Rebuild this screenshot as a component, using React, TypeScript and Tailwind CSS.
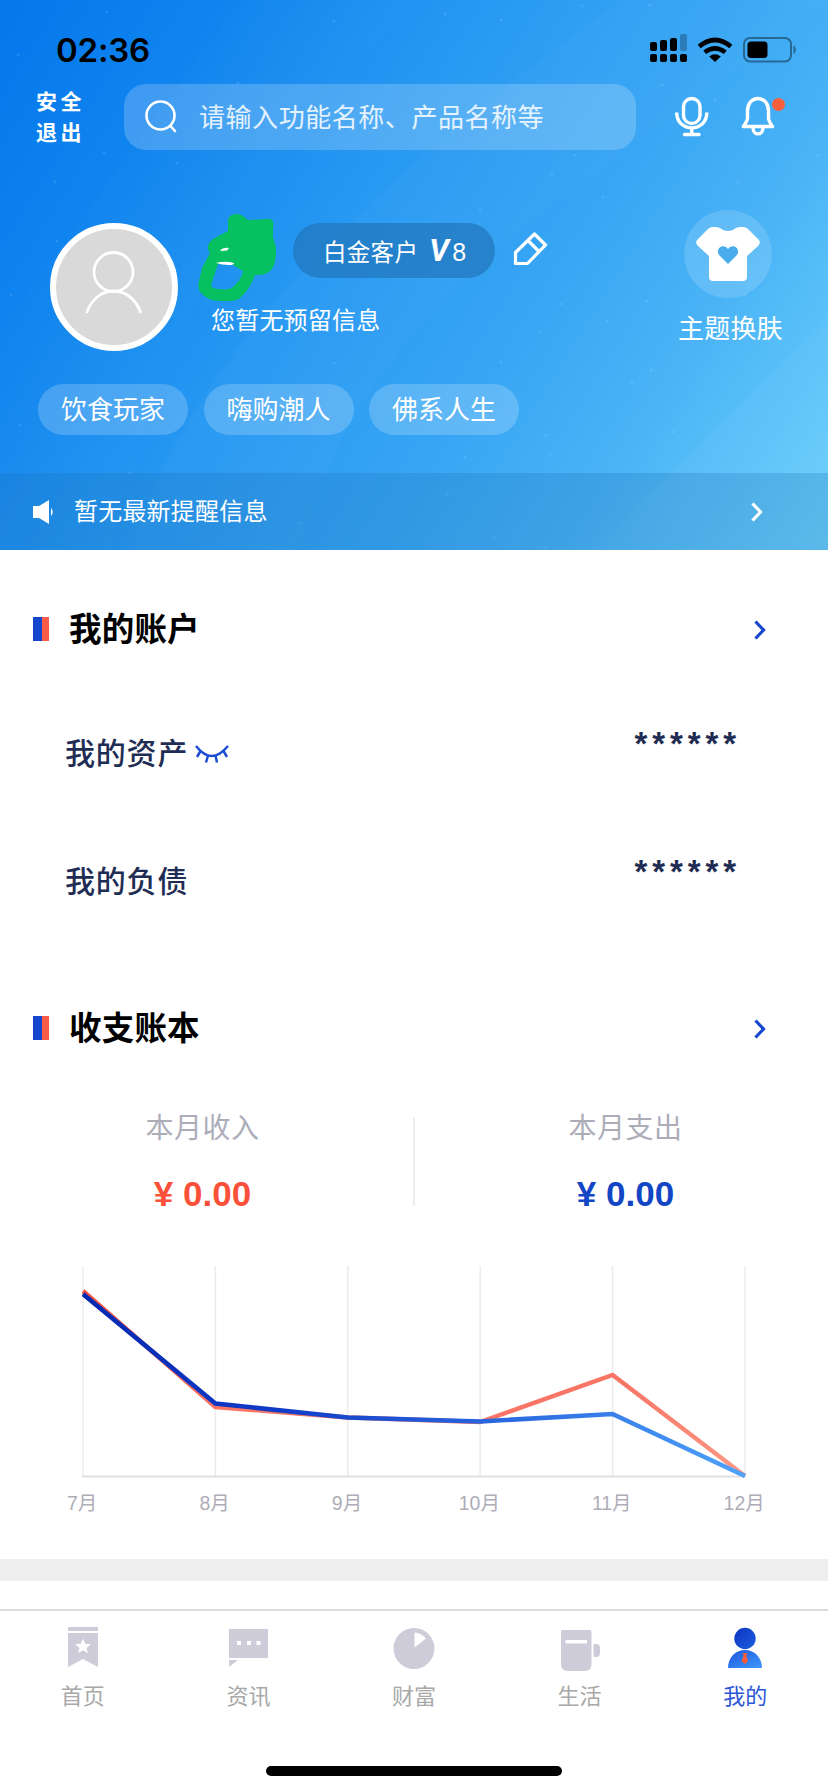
import type { ReactNode } from "react"

const months = ["7月", "8月", "9月", "10月", "11月", "12月"]
const income = [25, 141, 151.5, 156, 109, 210]
const expense = [28, 137.5, 151.5, 155.5, 148, 210]
const specks = [
  [107, 12], [334, 21], [501, 20], [650, 5], [18, 55], [238, 83], [662, 85], [104, 153], [55, 182], [177, 163],
  [552, 174], [603, 197], [738, 182], [818, 155], [57, 241], [11, 295], [647, 301], [561, 304], [607, 321], [540, 332],
  [334, 363], [501, 362], [651, 370], [632, 383], [673, 432], [546, 435], [20, 425], [465, 457], [550, 454], [130, 473],
  [301, 523], [494, 538], [545, 547], [447, 494], [582, 6], [445, 14], [715, 100], [575, 155], [745, 295], [480, 210],
]

const Chevron = ({ className }: { className: string }) => (
  <svg viewBox="0 0 14 22" className={`w-3.5 h-[22px] ${className}`} fill="none" stroke="currentColor" strokeWidth="3.2">
    <path d="M2.5 2.5 L10.5 11 L2.5 19.5" />
  </svg>
)

const StatusBar = () => (
  <div className="flex items-start h-[84px] pt-[30px] pl-14 pr-[31px] text-black">
    <span className="font-['Inter'] text-[33px] leading-10 font-semibold tracking-[-.2px]">02:36</span>
    <div className="flex items-start ml-auto pt-1">
      <svg viewBox="0 0 38 28" className="w-[38px] h-7">
        <rect x="0" y="8" width="7" height="9" rx="2" />
        <rect x="10" y="6" width="7" height="11" rx="2" />
        <rect x="20" y="4" width="7" height="13" rx="2" />
        <rect x="30" y="0" width="7" height="17" rx="2" opacity=".25" />
        <rect x="0" y="20" width="7" height="8" rx="2" />
        <rect x="10" y="20" width="7" height="8" rx="2" />
        <rect x="20" y="20" width="7" height="8" rx="2" />
        <rect x="30" y="20" width="7" height="8" rx="2" />
      </svg>
      <svg viewBox="0 0 36 26" className="w-9 h-[26px] ml-[9px] mt-[3px]" fill="none" stroke="#000" strokeWidth="4.6">
        <path d="M2.2 9.6 Q18 -3.6 33.8 9.6" />
        <path d="M7.7 15.3 Q18 7.3 28.3 15.3" />
        <path d="M12.2 19.6 Q18 14.8 23.8 19.6 L18 25Z" fill="#000" stroke="none" />
      </svg>
      <svg viewBox="0 0 54 26" className="w-[54px] h-[26px] ml-2.5 mt-[3px]">
        <rect x="1" y="1" width="47" height="23.5" rx="6" fill="none" stroke="#000" strokeOpacity=".4" strokeWidth="2" />
        <rect x="4.5" y="4.5" width="20" height="16.5" rx="3.5" />
        <path d="M51 9 Q54 12.7 51 16.5Z" opacity=".4" stroke="#000" />
      </svg>
    </div>
  </div>
)

const SearchRow = () => (
  <div className="flex items-center h-[66px] pl-9">
    <div className="w-[88px] -mt-[3px] text-[21px] leading-[30.5px] tracking-[3.6px] font-bold">
      <div>安全</div>
      <div>退出</div>
    </div>
    <div className="flex items-center w-[512px] h-[66px] rounded-[22px] bg-white/20 pl-[21px]">
      <svg viewBox="0 0 34 36" className="w-[34px] h-9" fill="none" stroke="#fff" strokeWidth="2.6" strokeLinecap="round">
        <circle cx="15.5" cy="16.5" r="14" />
        <path d="M25.5 27 L30 32" />
      </svg>
      <span className="ml-5 -mt-[3px] text-[26px] tracking-[.55px] text-white/85">请输入功能名称、产品名称等</span>
    </div>
    <svg viewBox="0 0 34 42" className="w-[34px] h-[42px] ml-[39px]" fill="none" stroke="#fff" strokeWidth="3.4">
      <rect x="8.5" y="2.5" width="16.5" height="25" rx="8.25" />
      <path d="M1.7 16.5 C1.7 37 31.8 37 31.8 16.5 M16.75 32 V38" />
      <path d="M9.5 38.5 H24" strokeLinecap="round" strokeWidth="3.4" />
    </svg>
    <div className="relative ml-8">
      <svg viewBox="0 0 34 42" className="w-[34px] h-[42px]" fill="none" stroke="#fff" strokeWidth="3.4" strokeLinejoin="round">
        <path d="M6.5 15 C6.5 7.5 11 2.5 17 2.5 S27.5 7.5 27.5 15 V22 C27.5 25 29 27 31.5 30.5 H2.3 C5 27 6.5 25 6.5 22Z" />
        <path d="M12 31.5 C12 40 22 40 22 31.5" />
      </svg>
      <span className="absolute left-[31px] top-[2px] size-[13px] rounded-full bg-[#fc5f3c]" />
    </div>
  </div>
)

const Profile = () => (
  <div className="flex items-start pt-[60px] h-[234px] pl-[50px]">
    <div className="mt-[13px] size-32 rounded-full border-6 border-white bg-[#d9d9d9]">
      <svg viewBox="0 0 116 116" className="size-[116px]" fill="none" stroke="#fff" strokeWidth="2.8" strokeLinecap="round">
        <circle cx="57.5" cy="43" r="19.5" />
        <path d="M31 83 C41 55 74 55 84.5 83" />
      </svg>
    </div>
    <div className="ml-5 w-[350px]">
      <div className="flex items-center h-[94px]">
        <svg viewBox="0 0 80 90" className="w-20 h-[90px] mt-0.5 shrink-0">
          <path
            fillRule="evenodd"
            fill="#07c160"
            d="M30 7 C31 1 40 -1 45 3 L50 7 L70 6 C75 6 76 9 75 14 L75 24 L78 35 C78 46 77 54 72 58 C68 62 62 62 57 62 C54 70 50 78 44 83 C40 88 34 88 28 88 C20 88 13 88 8 84 C2 80 -1 76 1 68 L4 55 L12 40 C8 35 10 30 15 26 L30 18Z M20 51 L35 52 L45 58 C44 65 39 70 35 74 C30 78 20 76 15 75 Q12 73 14 69Z"
          />
          <path d="M18 50 Q27 47.5 36 50 Q36 52 31 52 Q24 52 18 50Z M22 38 Q25 34 31 35 L29 37.5Z" fill="#fff" />
        </svg>
        <div className="flex items-center w-[202px] h-[55px] ml-[15px] mb-3.5 rounded-full bg-[#1f71b5]/65 pl-[30px] text-[23.5px] tracking-[.3px] shrink-0">
          <span className="mt-1">白金客户</span>
          <span className="ml-[11px] mt-0.5 font-['Roboto'] text-[31px] font-bold italic">V</span>
          <span className="ml-[3px] mt-1.5 font-['Liberation_Sans'] text-[25px]">8</span>
        </div>
        <svg viewBox="0 0 36 36" className="w-9 h-9 ml-[18px] shrink-0 mb-[17px]" fill="none" stroke="#fff" strokeWidth="3.2" strokeLinejoin="round">
          <path d="M2.5 21.5 L21.5 3 L32.5 14 L14.5 32.5 H2.5Z M15 9.5 L26 20.5" />
        </svg>
      </div>
      <p className="ml-[13px] -mt-px text-2xl leading-8 tracking-[.2px]">您暂无预留信息</p>
    </div>
    <div className="flex flex-col items-center ml-[130px]">
      <div className="flex items-center justify-center size-[88px] rounded-full bg-white/15 mr-1">
        <svg viewBox="0 0 64 56" className="w-16 h-14">
          <path
            d="M17 1 H20 C25 1 26 5 32 5 S39 1 44 1 H47 Q50 1 52 3 L63 14 Q65 17 62 20 L51 30 V51 Q51 55 47 55 H17 Q13 55 13 51 V30 L2 20 Q-1 17 1 14 L12 3 Q14 1 17 1Z"
            fill="#fff"
          />
          <path d="M32 38 L24 30 C19 25 24 18 30 21 L32 23 L34 21 C40 18 45 25 40 30Z" fill="#48acef" />
        </svg>
      </div>
      <span className="mt-[9px] text-[26px] tracking-[.2px] whitespace-nowrap">主题换肤</span>
    </div>
  </div>
)

const SectionTitle = ({ title }: { title: string }) => (
  <div className="flex items-center h-12 pl-[33px] pr-[61px]">
    <div className="w-[9px] h-6 bg-[#1546ce]" />
    <div className="w-[7px] h-6 bg-[#fb5c48]" />
    <h2 className="ml-5 -mt-[3px] text-[32.5px] leading-none tracking-[.2px] font-bold text-black">{title}</h2>
    <Chevron className="ml-auto mt-0.5 text-[#1546ce]" />
  </div>
)

const BalanceRow = ({ label, children }: { label: string; children?: ReactNode }) => (
  <div className="flex items-center h-32 pl-[65px] pr-[87px] text-[30px] font-medium text-[#1f2d54]">
    <span className="-mt-[3px] tracking-[.8px]">{label}</span>
    {children}
    <span className="ml-auto mb-[18px] font-['Liberation_Sans'] text-[33px] leading-8 tracking-[4.9px] font-bold">******</span>
  </div>
)

const Summary = ({ label, amount, color }: { label: string; amount: string; color: string }) => (
  <div className="w-[405px] flex flex-col items-center">
    <span className="-mt-px text-[28px] leading-9 tracking-[.5px] text-[#adadba]">{label}</span>
    <span className={`mt-[30px] font-['Liberation_Sans'] text-[35px] leading-10 font-bold ${color}`}>{amount}</span>
  </div>
)

const TrendChart = () => {
  const points = (values: number[]) => values.map((v, i) => `${1 + i * 132.4},${v}`).join(" ")
  return (
    <div className="pl-[82px]">
      <svg viewBox="0 0 664 214" className="w-[664px] h-[214px] block" fill="none">
        <defs>
          <linearGradient id="income" gradientUnits="userSpaceOnUse" x1="0" y1="20" x2="664" y2="210">
            <stop stopColor="#f4513f" />
            <stop offset=".25" stopColor="#fb7565" />
            <stop offset=".8" stopColor="#f87666" />
            <stop offset="1" stopColor="#ff9a86" />
          </linearGradient>
          <linearGradient id="expense" gradientUnits="userSpaceOnUse" x1="0" y1="20" x2="664" y2="210">
            <stop stopColor="#0429b0" />
            <stop offset=".3" stopColor="#1039c6" />
            <stop offset=".65" stopColor="#2b6ae0" />
            <stop offset="1" stopColor="#4fa3fa" />
          </linearGradient>
        </defs>
        {months.map((m, i) => (
          <path key={m} d={`M${1 + i * 132.4} 0V210`} stroke="#ececec" strokeWidth="1.5" />
        ))}
        <path d="M0 210.5H664" stroke="#e0e0e2" strokeWidth="2" />
        <polyline points={points(income)} stroke="url(#income)" strokeWidth="4.4" />
        <polyline points={points(expense)} stroke="url(#expense)" strokeWidth="4.6" />
      </svg>
      <div className="flex -ml-[66px] mt-[9px]">
        {months.map((m) => (
          <span key={m} className="w-[132.4px] shrink-0 text-center text-[19.5px] leading-7 text-[#adadb8] font-['Liberation_Sans','Noto_Sans_CJK_SC',sans-serif]">{m}</span>
        ))}
      </div>
    </div>
  )
}

const TabItem = ({ label, active, children }: { label: string; active?: boolean; children: ReactNode }) => (
  <div className="flex-1 flex flex-col items-center">
    <svg viewBox="0 0 44 46" className="w-11 h-[46px]" fill="#cdccd8">{children}</svg>
    <span className={`mt-1.5 text-[22px] leading-8 ${active ? "text-[#2d57d6]" : "text-[#a8a8a8]"}`}>{label}</span>
  </div>
)

const TabBar = () => (
  <nav className="flex h-[182px] border-t-2 border-[#dcdcdf] pt-[15px]">
    <TabItem label="首页">
      <path d="M7 1H37V5H7Z M7 7H37V41L22 33L7 41Z" />
      <path d="M22 12.5L24.2 17.8L29.8 18.2L25.5 21.9L26.9 27.2L22 24.3L17.1 27.2L18.5 21.9L14.2 18.2L19.8 17.8Z" fill="#fff" />
    </TabItem>
    <TabItem label="资讯">
      <path d="M3 3H42V32H3Z M3 34H12L3 41Z" />
      <path d="M11 15h4v4h-4z M21 15h4v4h-4z M30.5 15h4v4h-4z" fill="#fff" />
    </TabItem>
    <TabItem label="财富">
      <circle cx="22" cy="22.5" r="20.5" />
      <path d="M22.5 21.5V6.5Q29 6.5 34 12.5Z" fill="#fff" />
    </TabItem>
    <TabItem label="生活">
      <path d="M4 4H32Q33.5 4 33.5 6V38Q33.5 45 27 45H10Q3 45 3 38V6Q3 4 4 4Z M35.5 18H38Q42 18 42 22V27Q42 31 38 31H35.5Z" />
      <path d="M7.5 14H29V17.5H7.5Z" fill="#fff" />
    </TabItem>
    <TabItem label="我的" active>
      <defs>
        <linearGradient id="person" x1="0" y1="0" x2="1" y2="1">
          <stop stopColor="#0a33c0" />
          <stop offset="1" stopColor="#1e5fe0" />
        </linearGradient>
        <linearGradient id="body" x1="0" y1="0" x2="1" y2="1">
          <stop stopColor="#1a55dc" />
          <stop offset="1" stopColor="#4299fb" />
        </linearGradient>
      </defs>
      <circle cx="22" cy="12.5" r="10.7" fill="url(#person)" />
      <path d="M5 42C5 32 12 24 22 24S39 32 39 42Z" fill="url(#body)" />
      <path d="M20 27H24L23.5 30L25 35L22 38L18.5 35L20.5 30Z" fill="#fb5a36" />
    </TabItem>
  </nav>
)

const App = () => {
  return (
    <div className="w-[828px] h-[1792px] overflow-hidden bg-white text-white font-['Noto_Sans_CJK_SC',sans-serif]">
      {/* HEADER */}
      <header className="relative isolate h-[550px] bg-[linear-gradient(122deg,#0478ec_0%,#0f83ee_18%,#2698f2_40%,#38a6f4_62%,#4bb4f6_78%,#6dd2fc_100%)]">
        <svg viewBox="0 0 828 550" className="absolute inset-0 -z-10 w-full h-full" fill="#fff">
          <path d="M0 330L240 0H420Q190 210 110 550H0Z" opacity=".012" />
          <path d="M130 550Q190 340 500 90L620 0H828L520 230Q340 380 300 550Z" opacity=".02" />
          <path d="M590 550L828 320V550Z" opacity=".03" />
          {specks.map(([x, y]) => (
            <circle key={`${x}-${y}`} cx={x} cy={y} r="1.6" opacity=".1" />
          ))}
        </svg>
        <StatusBar />
        <SearchRow />
        <Profile />
        <div className="flex gap-[15.5px] pl-[38px] h-[89px]">
          {["饮食玩家", "嗨购潮人", "佛系人生"].map((tag) => (
            <span key={tag} className="flex items-center justify-center w-[150px] h-[51px] pb-1 rounded-full bg-white/20 text-[26px]">{tag}</span>
          ))}
        </div>
        <div className="flex items-center h-[77px] bg-[#1c6fb4]/25 pl-8 pr-16">
          <svg viewBox="0 0 22 26" className="w-[22px] h-[26px]" fill="#fff">
            <path d="M1 7H7L17 1V25L7 19H1Z M19 9Q22.5 13 19 17Z" />
          </svg>
          <span className="ml-5 -mt-[3px] text-2xl tracking-[.2px]">暂无最新提醒信息</span>
          <Chevron className="ml-auto" />
        </div>
      </header>

      {/* ACCOUNT */}
      <section className="pt-[55px] h-[399px]">
        <SectionTitle title="我的账户" />
        <div className="pt-9">
          <BalanceRow label="我的资产">
            <svg viewBox="0 0 34 20" className="w-[34px] h-5 ml-[7px] mt-0.5" fill="none" stroke="#1c4fd6" strokeWidth="2.5">
              <path d="M1 2Q16.5 22 33 2 M5.5 7L2 13 M28.5 7L32 13 M13 11.5L11 18.5 M20.5 11.5L22 18.5" />
            </svg>
          </BalanceRow>
          <BalanceRow label="我的负债" />
        </div>
      </section>

      {/* LEDGER */}
      <section className="pt-[55px] h-[610px]">
        <SectionTitle title="收支账本" />
        <div className="flex items-start justify-between mt-[57px] h-[157px]">
          <Summary label="本月收入" amount="¥ 0.00" color="text-[#fb513a]" />
          <div className="w-0.5 h-[89px] mt-2 bg-[#ededf2]" />
          <Summary label="本月支出" amount="¥ 0.00" color="text-[#1246c4]" />
        </div>
        <TrendChart />
      </section>

      <div className="h-[22px] bg-[#eee]" />
      <div className="h-7" />
      <TabBar />
      <div className="relative -top-[25px] mx-auto w-[296px] h-2.5 rounded-full bg-black" />
    </div>
  )
}

export default App
